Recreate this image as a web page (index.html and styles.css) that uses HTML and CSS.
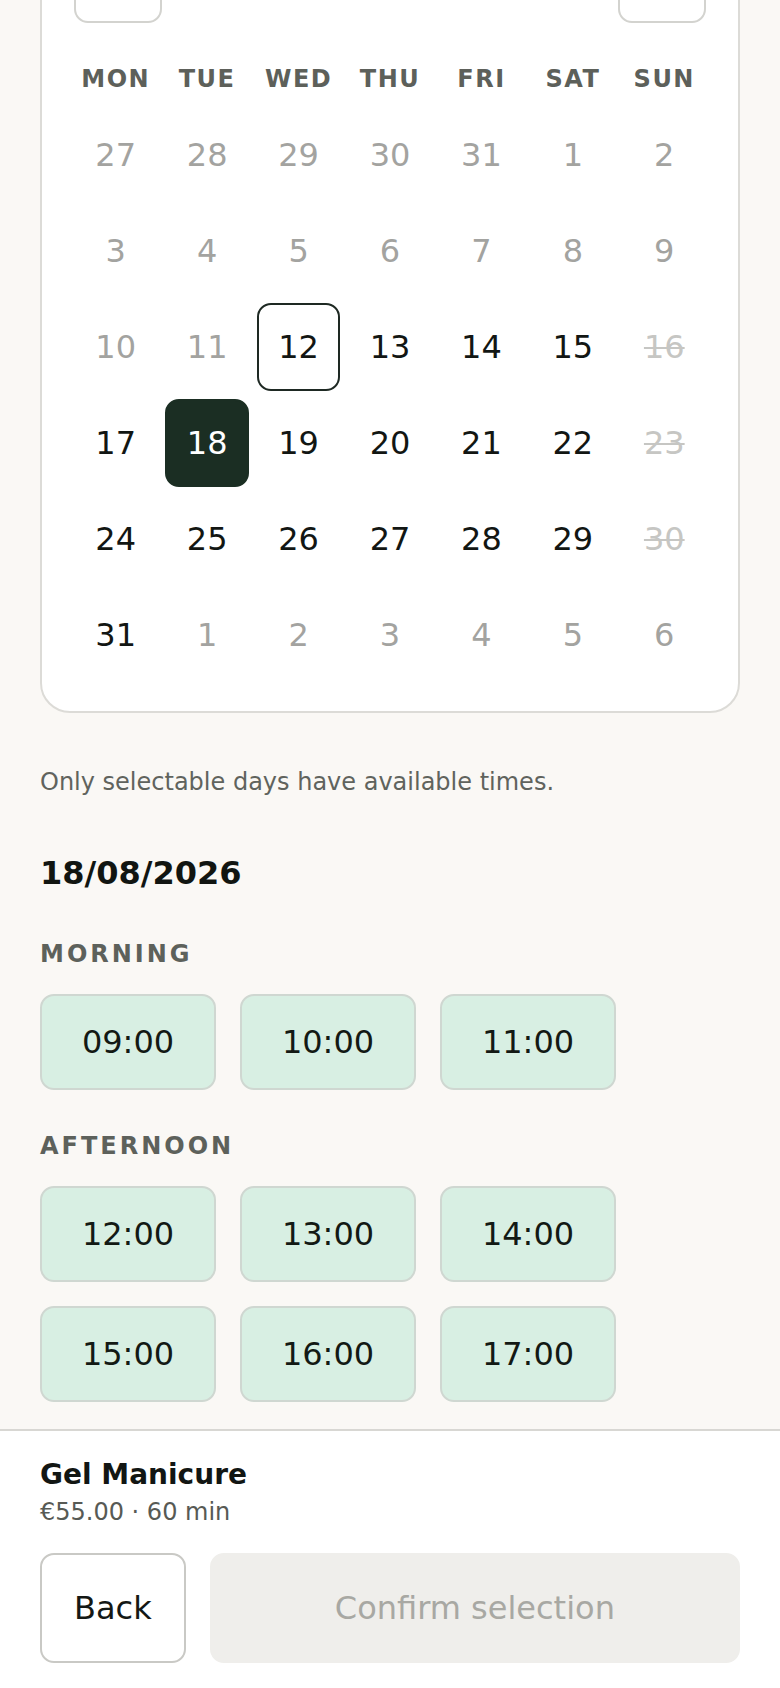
FILE: index.html
```html
<!DOCTYPE html>
<html lang="en">
<head>
<meta charset="utf-8">
<title>Choose a time</title>
<link rel="stylesheet" href="styles.css">
</head>
<body>
<div class="app">
  <main class="content">
    <div class="scrolled">
      <section class="card" aria-label="August 2026">
        <div class="cal-head">
          <button class="nav-btn" aria-label="Previous month">
            <svg width="28" height="28" viewBox="0 0 24 24" fill="none" stroke="#1d2a23" stroke-width="2" stroke-linecap="round" stroke-linejoin="round"><path d="M15 18l-6-6 6-6"/></svg>
          </button>
          <button class="nav-btn" aria-label="Next month">
            <svg width="28" height="28" viewBox="0 0 24 24" fill="none" stroke="#1d2a23" stroke-width="2" stroke-linecap="round" stroke-linejoin="round"><path d="M9 18l6-6-6-6"/></svg>
          </button>
        </div>
        <div class="weekdays">
          <span>MON</span><span>TUE</span><span>WED</span><span>THU</span><span>FRI</span><span>SAT</span><span>SUN</span>
        </div>
        <div class="days">
          <button class="day muted">27</button>
          <button class="day muted">28</button>
          <button class="day muted">29</button>
          <button class="day muted">30</button>
          <button class="day muted">31</button>
          <button class="day muted">1</button>
          <button class="day muted">2</button>

          <button class="day muted">3</button>
          <button class="day muted">4</button>
          <button class="day muted">5</button>
          <button class="day muted">6</button>
          <button class="day muted">7</button>
          <button class="day muted">8</button>
          <button class="day muted">9</button>

          <button class="day muted">10</button>
          <button class="day muted">11</button>
          <button class="day today">12</button>
          <button class="day">13</button>
          <button class="day">14</button>
          <button class="day">15</button>
          <button class="day closed">16</button>

          <button class="day">17</button>
          <button class="day selected">18</button>
          <button class="day">19</button>
          <button class="day">20</button>
          <button class="day">21</button>
          <button class="day">22</button>
          <button class="day closed">23</button>

          <button class="day">24</button>
          <button class="day">25</button>
          <button class="day">26</button>
          <button class="day">27</button>
          <button class="day">28</button>
          <button class="day">29</button>
          <button class="day closed">30</button>

          <button class="day">31</button>
          <button class="day muted">1</button>
          <button class="day muted">2</button>
          <button class="day muted">3</button>
          <button class="day muted">4</button>
          <button class="day muted">5</button>
          <button class="day muted">6</button>
        </div>
      </section>

      <p class="hint">Only selectable days have available times.</p>

      <h2 class="date">18/08/2026</h2>

      <div class="period">
        <h3 class="period-title">MORNING</h3>
        <div class="slots">
          <button class="slot">09:00</button>
          <button class="slot">10:00</button>
          <button class="slot">11:00</button>
        </div>
      </div>

      <div class="period">
        <h3 class="period-title">AFTERNOON</h3>
        <div class="slots">
          <button class="slot">12:00</button>
          <button class="slot">13:00</button>
          <button class="slot">14:00</button>
          <button class="slot">15:00</button>
          <button class="slot">16:00</button>
          <button class="slot">17:00</button>
        </div>
      </div>
    </div>
  </main>

  <footer class="footer">
    <div class="service-name">Gel Manicure</div>
    <div class="service-meta">€55.00 · 60 min</div>
    <div class="actions">
      <button class="btn btn-back">Back</button>
      <button class="btn btn-confirm" disabled>Confirm selection</button>
    </div>
  </footer>
</div>
</body>
</html>
```

FILE: styles.css
```css
* {
  box-sizing: border-box;
}

html, body {
  margin: 0;
  padding: 0;
}

body {
  font-family: "DejaVu Sans", sans-serif;
  background: #faf8f5;
  color: #121613;
}

button {
  font-family: inherit;
  cursor: pointer;
}

.app {
  height: 1688px;
  display: flex;
  flex-direction: column;
  overflow: hidden;
}

.content {
  flex: 1;
  min-height: 0;
  overflow: hidden;
  padding: 0 40px;
}

.scrolled {
  margin-top: -99px;
}

/* Calendar card */
.card {
  background: #ffffff;
  border: 2px solid #dcdbd7;
  border-radius: 30px;
  padding: 32px;
}

.cal-head {
  display: flex;
  align-items: center;
  justify-content: space-between;
  height: 88px;
}

.nav-btn {
  width: 88px;
  height: 88px;
  border: 2px solid #d3d3cf;
  border-radius: 14px;
  background: #ffffff;
  display: flex;
  align-items: center;
  justify-content: center;
  padding: 0;
}

.weekdays {
  display: grid;
  grid-template-columns: repeat(7, 1fr);
  column-gap: 8px;
  margin-top: 40px;
  height: 32px;
}

.weekdays span {
  text-align: center;
  font-size: 24px;
  line-height: 32px;
  font-weight: 700;
  letter-spacing: 1.5px;
  color: #5d605a;
}

.days {
  display: grid;
  grid-template-columns: repeat(7, 1fr);
  grid-auto-rows: 88px;
  column-gap: 8px;
  row-gap: 8px;
  margin-top: 16px;
}

.day {
  border: 2px solid transparent;
  border-radius: 14px;
  background: transparent;
  font-size: 32px;
  line-height: 1;
  color: #121613;
  padding: 0;
}

.day.muted {
  color: #a3a3a0;
}

.day.closed {
  color: #c6c6c3;
  text-decoration: line-through;
  text-decoration-thickness: 2px;
}

.day.today {
  border-color: #1e2923;
  background: #ffffff;
}

.day.selected {
  background: #1b2e23;
  border-color: #1b2e23;
  color: #ffffff;
}

/* Below calendar */
.hint {
  margin: 51px 0 0;
  font-size: 24px;
  line-height: 36px;
  color: #60635d;
}

.date {
  margin: 53px 0 0;
  font-size: 32px;
  line-height: 40px;
  font-weight: 700;
  color: #111511;
}

.period-title {
  margin: 45px 0 0;
  font-size: 24px;
  line-height: 32px;
  font-weight: 700;
  letter-spacing: 3px;
  color: #5d615b;
}

.period + .period .period-title {
  margin-top: 40px;
}

.slots {
  display: grid;
  grid-template-columns: repeat(3, 176px);
  grid-auto-rows: 96px;
  column-gap: 24px;
  row-gap: 24px;
  margin-top: 24px;
}

.slot {
  border: 2px solid #cfd7d1;
  border-radius: 14px;
  background: #d8efe3;
  font-size: 32px;
  color: #131914;
  padding: 0;
}

/* Footer */
.footer {
  flex: none;
  background: #ffffff;
  border-top: 2px solid #d8d7d3;
  padding: 28px 40px 25px;
}

.service-name {
  font-size: 28px;
  line-height: 32px;
  font-weight: 700;
  color: #121613;
}

.service-meta {
  margin-top: 5px;
  font-size: 24px;
  line-height: 32px;
  color: #575a55;
}

.actions {
  display: flex;
  gap: 24px;
  margin-top: 25px;
}

.btn {
  height: 110px;
  border-radius: 14px;
  font-size: 32px;
  padding: 0 32px;
}

.btn-back {
  flex: none;
  background: #ffffff;
  border: 2px solid #c9c9c5;
  color: #141815;
}

.btn-confirm {
  flex: 1;
  background: #efeeeb;
  border: 2px solid #efeeeb;
  color: #a8a8a3;
  cursor: default;
}
```
